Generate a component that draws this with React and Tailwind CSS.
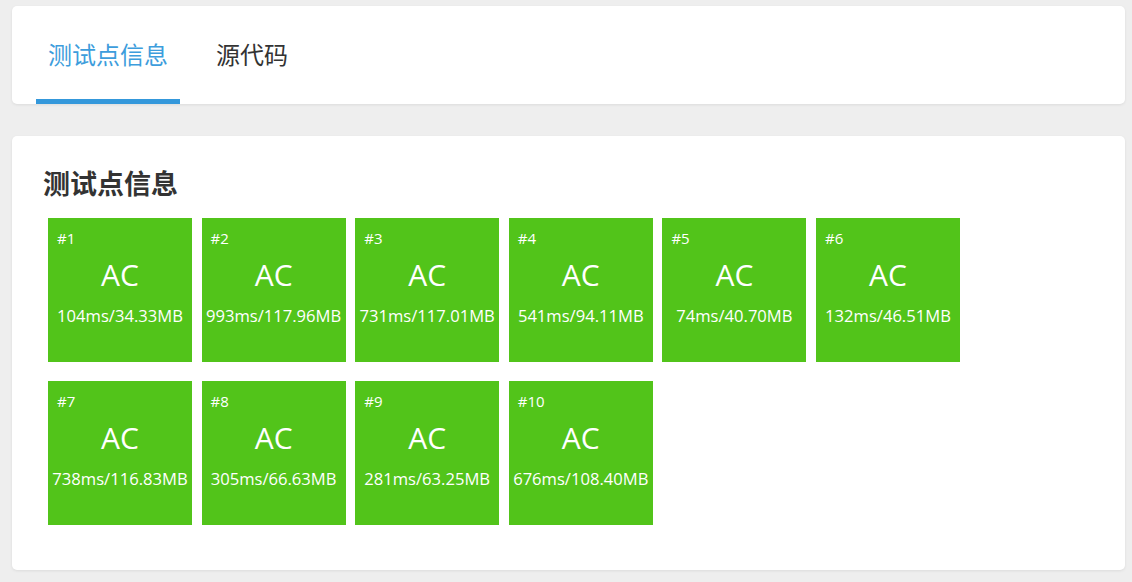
import React from "react";

const cases = [
  { id: 1, info: "104ms/34.33MB" },
  { id: 2, info: "993ms/117.96MB" },
  { id: 3, info: "731ms/117.01MB" },
  { id: 4, info: "541ms/94.11MB" },
  { id: 5, info: "74ms/40.70MB" },
  { id: 6, info: "132ms/46.51MB" },
  { id: 7, info: "738ms/116.83MB" },
  { id: 8, info: "305ms/66.63MB" },
  { id: 9, info: "281ms/63.25MB" },
  { id: 10, info: "676ms/108.40MB" },
];

const cjk = "font-['Open_Sans','Noto_Sans_CJK_SC',sans-serif]";

export default function App() {
  return (
    <div className={`min-h-[582px] bg-[#eeeeee] pl-3 pr-[7px] pt-[6px] pb-3 ${cjk}`}>
      {/* Tabs */}
      <div className="flex h-[98px] items-stretch rounded-[5px] bg-white px-6 shadow-[0_1px_3px_rgba(0,0,0,0.08)]">
        <div className="flex flex-col justify-end">
          <div className="flex flex-1 items-center px-3 pt-1 text-[24px] text-[#3d9ddc]">测试点信息</div>
          <div className="h-[5px] bg-[#3498db]" />
        </div>
        <div className="ml-6 flex flex-col justify-end">
          <div className="flex flex-1 items-center px-3 pt-1 text-[24px] text-[#333]">源代码</div>
          <div className="h-[5px]" />
        </div>
      </div>

      {/* Test cases */}
      <div className="mt-8 h-[434px] rounded-[5px] bg-white pl-[31px] pt-[29px] shadow-[0_1px_3px_rgba(0,0,0,0.08)]">
        <h2 className="text-[27px] font-bold leading-[38px] text-[#333]">测试点信息</h2>
        <div className="mt-[15px] flex w-[930px] flex-wrap gap-x-[9.6px] gap-y-[19px] pl-[5px]">
          {cases.map((c) => (
            <div key={c.id} className="relative h-[144px] w-[144px] bg-[#52c41a] text-white">
              <div className="absolute left-[9px] top-[11px] text-[15px] leading-[18px]">#{c.id}</div>
              <div className="pt-[39px] text-center text-[30px] leading-[36px]">AC</div>
              <div className="mt-[12.5px] whitespace-nowrap text-center text-[16.6px] leading-[20px]">{c.info}</div>
            </div>
          ))}
        </div>
      </div>
    </div>
  );
}
